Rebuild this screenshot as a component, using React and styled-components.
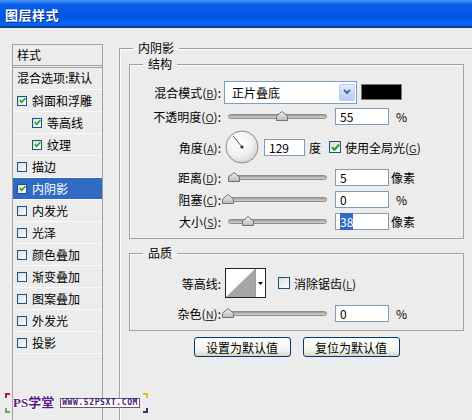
import React from "react";
import styled, { createGlobalStyle } from "styled-components";

const GlobalStyle = createGlobalStyle`
  html, body {
    margin: 0;
    padding: 0;
    background: #ececec;
  }
  body {
    font-family: "Noto Sans CJK SC", "Liberation Sans", sans-serif;
    font-size: 12px;
    color: #000;
  }
`;

const Window = styled.div`
  position: relative;
  width: 472px;
  height: 420px;
  overflow: hidden;
  background: #ececec;
  display: flex;
  flex-direction: column;
`;

const TitleBar = styled.div`
  height: 28px;
  flex: none;
  display: flex;
  align-items: center;
  padding-left: 5px;
  box-sizing: border-box;
  background: linear-gradient(
    to bottom,
    #4a95f6 0,
    #2f82f2 2px,
    #0a5fe8 4px,
    #0055e3 18px,
    #0a66f2 23px,
    #0862ee 26px,
    #0b3f8f 26px,
    #0b3f8f 28px
  );
`;

const Title = styled.span`
  color: #fff;
  font-size: 13px;
  font-weight: 700;
  letter-spacing: 0.5px;
  text-shadow: 1px 1px 0 #0a2a80;
`;

const Body = styled.div`
  position: relative;
  flex: 1;
  display: flex;
  align-items: stretch;
`;

//sidebar------------------------------------------------------------

const Sidebar = styled.div`
  margin-left: 12px;
  margin-top: 16px;
  width: 91px;
  flex: none;
  box-sizing: border-box;
  border: 1px solid #a0a0a0;
  border-bottom: none;
`;

const SideHeader = styled.div`
  height: 23px;
  box-sizing: border-box;
  padding-left: 4px;
  line-height: 19px;
  border-bottom: 3px double #a0a0a0;
`;

const SideRow = styled.div`
  height: 22px;
  box-sizing: border-box;
  display: flex;
  align-items: center;
  gap: 5px;
  padding-left: ${(p) => (p.$indent ? 19 : 4)}px;
  padding-bottom: ${(p) => (p.$top ? 3 : 0)}px;
  border-bottom: 1px solid #fafafa;
  white-space: nowrap;
  background: ${(p) => (p.$selected ? "#316ac5" : "transparent")};
  color: ${(p) => (p.$selected ? "#fff" : "#000")};
`;

const BoxOuter = styled.span`
  width: ${(p) => p.$size}px;
  height: ${(p) => p.$size}px;
  flex: none;
  box-sizing: border-box;
  border: 1px solid #1c5180;
  background: linear-gradient(135deg, #dcdcd7, #fff);
  display: flex;
  align-items: center;
  justify-content: center;
`;

function CheckBox({ checked, size = 10 }) {
  return (
    <BoxOuter $size={size}>
      {checked && (
        <svg width={size - 3} height={size - 3} viewBox="0 0 7 7">
          <path d="M0.8 3.3 L2.7 5.3 L6.3 1.2" fill="none" stroke="#21a121" strokeWidth="1.6" />
        </svg>
      )}
    </BoxOuter>
  );
}

//main panel------------------------------------------------------------

const Main = styled.div`
  margin-left: 16px;
  flex: none;
`;

const Group = styled.fieldset`
  margin: ${(p) => p.$mt || 0}px 0 0 0;
  padding: 0;
  min-width: 0;
  box-sizing: border-box;
  width: ${(p) => p.$w}px;
  height: ${(p) => p.$h}px;
  border: 1px solid #a0a0a0;
  box-shadow: inset 1px 1px 0 #fbfbfb;
`;

const Legend = styled.legend`
  margin-left: 13px;
  padding: 0 5px;
  line-height: 16px;
  height: 16px;
`;

const GroupInner = styled.div`
  padding: ${(p) => p.$pt || 0}px 0 0 ${(p) => p.$pl || 0}px;
`;

const Row = styled.div`
  display: flex;
  align-items: center;
  height: ${(p) => p.$h}px;
  margin-top: ${(p) => p.$mt || 0}px;
  white-space: nowrap;
`;

const Label = styled.div`
  width: 94px;
  flex: none;
  box-sizing: border-box;
  padding-right: 3px;
  text-align: right;
`;

const Key = styled.span`
  font-size: 11px;
  color: #333;
  text-decoration: underline;
`;

const Select = styled.div`
  width: 133px;
  height: 23px;
  box-sizing: border-box;
  border: 1px solid #7f9db9;
  background: #fff;
  display: flex;
  align-items: center;
  justify-content: space-between;
  padding-left: 7px;
`;

const SelectButton = styled.span`
  width: 16px;
  height: 17px;
  margin-right: 1px;
  box-sizing: border-box;
  border: 1px solid #b9cdf7;
  border-radius: 2px;
  background: linear-gradient(#e2ebfe, #b6cbf8);
  display: flex;
  align-items: center;
  justify-content: center;
`;

const Swatch = styled.div`
  width: 41px;
  height: 16px;
  margin-left: 4px;
  box-sizing: border-box;
  border: 1px solid #777;
  background: #000;
`;

const SliderBox = styled.div`
  width: 111px;
  flex: none;
  box-sizing: border-box;
  padding: 0 8px 0 4px;
`;

const TrackArea = styled.div`
  position: relative;
  height: 14px;
  display: flex;
  align-items: center;
`;

const Track = styled.div`
  width: 100%;
  height: 5px;
  box-sizing: border-box;
  border-radius: 3px;
  border: 1px solid #8d8d8d;
  background: linear-gradient(#9c9c9c, #d4d4d4);
`;

const Thumb = styled.div`
  position: absolute;
  top: 2px;
  width: 12px;
  height: 10px;
  transform: translateX(-50%);
  display: flex;
`;

function Slider({ value }) {
  return (
    <SliderBox>
      <TrackArea>
        <Track />
        <Thumb style={{ left: `${value}%` }}>
          <svg width="12" height="10" viewBox="0 0 12 10">
            <defs>
              <linearGradient id="tg" x1="0" y1="0" x2="0" y2="1">
                <stop offset="0" stopColor="#f4f4f4" />
                <stop offset="1" stopColor="#b8b8b8" />
              </linearGradient>
            </defs>
            <path d="M6 0.5 L11.5 5.2 L11.5 9.5 L0.5 9.5 L0.5 5.2 Z" fill="url(#tg)" stroke="#707070" />
          </svg>
        </Thumb>
      </TrackArea>
    </SliderBox>
  );
}

const Field = styled.div`
  width: ${(p) => p.$w || 54}px;
  height: 17px;
  flex: none;
  box-sizing: border-box;
  border: 1px solid #7f9db9;
  background: #fff;
  padding-left: 4px;
  line-height: 15px;
`;

const Selected = styled.span`
  background: #316ac5;
  color: #fff;
`;

const Unit = styled.span`
  margin-left: ${(p) => p.$ml || 5}px;
`;

const DialBox = styled.div`
  width: 40px;
  flex: none;
  display: flex;
  padding-left: 1px;
  box-sizing: border-box;
`;

const CheckLabel = styled.div`
  display: flex;
  align-items: center;
  gap: 4px;
  margin-left: ${(p) => p.$ml}px;
`;

const ContourBox = styled.div`
  width: 41px;
  height: 30px;
  margin-left: 1px;
  flex: none;
  box-sizing: border-box;
  border: 1px solid #222;
  background: #fff;
  display: flex;
`;

const ContourArrow = styled.div`
  flex: 1;
  border-left: 1px solid #9a9a9a;
  display: flex;
  align-items: center;
  justify-content: center;
`;

const ButtonRow = styled.div`
  width: 335px;
  margin-top: 6px;
  display: flex;
  justify-content: center;
  gap: 12px;
`;

const Button = styled.div`
  width: 97px;
  height: 20px;
  box-sizing: border-box;
  border: 1px solid #003c74;
  border-radius: 3px;
  background: linear-gradient(#ffffff, #f3f3ee 70%, #d8d3c8);
  display: flex;
  align-items: center;
  justify-content: center;
`;

//watermark------------------------------------------------------------

const Watermark = styled.div`
  position: absolute;
  left: 5px;
  top: 365px;
  display: flex;
  align-items: center;
  gap: 3px;
`;

const Corners = styled.div`
  display: flex;
  flex-direction: column;
  justify-content: space-between;
  height: 20px;
`;

const Corner = styled.span`
  width: 5px;
  height: 5px;
  box-sizing: border-box;
  border-top: ${(p) => (p.$top ? `2px solid ${p.$c}` : "none")};
  border-bottom: ${(p) => (p.$top ? "none" : `2px solid ${p.$c}`)};
  border-left: ${(p) => (p.$left ? `2px solid ${p.$c}` : "none")};
  border-right: ${(p) => (p.$left ? "none" : `2px solid ${p.$c}`)};
`;

const Brand = styled.span`
  font-family: "Liberation Serif", "Noto Sans CJK SC", serif;
  font-size: 13px;
  font-weight: 700;
  color: #5b1a86;
  line-height: 16px;
  text-shadow: 1px 0 #fff, -1px 0 #fff, 0 1px #fff, 0 -1px #fff;
  margin-right: 3px;
`;

const Url = styled.span`
  font-family: "DejaVu Sans Mono", monospace;
  font-size: 8px;
  font-weight: 700;
  line-height: 8px;
  color: #4a1a70;
  background: #fff;
  border: 1px solid #6a5a7a;
  padding: 0 1px;
  letter-spacing: 0.6px;
`;

const layers = [
  { name: "斜面和浮雕", checked: true },
  { name: "等高线", checked: true, indent: true },
  { name: "纹理", checked: true, indent: true },
  { name: "描边" },
  { name: "内阴影", checked: true, selected: true },
  { name: "内发光" },
  { name: "光泽" },
  { name: "颜色叠加" },
  { name: "渐变叠加" },
  { name: "图案叠加" },
  { name: "外发光" },
  { name: "投影" },
];

function App() {
  const a = (129 * Math.PI) / 180;
  const lx = 17 + 14 * Math.cos(a);
  const ly = 17 - 14 * Math.sin(a);

  return (
    <>
      <GlobalStyle />
      <Window>
        <TitleBar>
          <Title>图层样式</Title>
        </TitleBar>
        <Body>
          <Sidebar>
            <SideHeader>样式</SideHeader>
            <SideRow $top>混合选项:默认</SideRow>
            {layers.map((l) => (
              <SideRow key={l.name} $indent={l.indent} $selected={l.selected}>
                <CheckBox checked={l.checked} />
                {l.name}
              </SideRow>
            ))}
          </Sidebar>

          <Main>
            <Group $mt={12} $w={360} $h={420}>
              <Legend>内阴影</Legend>
              <GroupInner $pl={9}>
                {/* 结构 */}
                <Group $w={335} $h={183}>
                  <Legend>结构</Legend>
                  <GroupInner $pt={8}>
                    <Row $h={24}>
                      <Label>
                        混合模式(<Key>B</Key>):
                      </Label>
                      <Select>
                        正片叠底
                        <SelectButton>
                          <svg width="8" height="6" viewBox="0 0 8 6">
                            <path d="M1 1 L4 4 L7 1" fill="none" stroke="#4d6185" strokeWidth="1.8" />
                          </svg>
                        </SelectButton>
                      </Select>
                      <Swatch />
                    </Row>
                    <Row $h={24}>
                      <Label>
                        不透明度(<Key>O</Key>):
                      </Label>
                      <Slider value={55} />
                      <Field>55</Field>
                      <Unit $ml={7}>%</Unit>
                    </Row>
                    <Row $h={38}>
                      <Label>
                        角度(<Key>A</Key>):
                      </Label>
                      <DialBox>
                        <svg width="34" height="34" viewBox="0 0 34 34">
                          <defs>
                            <radialGradient id="dg" cx="0.4" cy="0.35" r="0.7">
                              <stop offset="0" stopColor="#ffffff" />
                              <stop offset="0.6" stopColor="#f0f0f0" />
                              <stop offset="1" stopColor="#cfcfcf" />
                            </radialGradient>
                          </defs>
                          <circle cx="17" cy="17" r="16" fill="url(#dg)" stroke="#8c8c8c" />
                          <line x1="17" y1="17" x2={lx} y2={ly} stroke="#555" strokeWidth="1" />
                          <circle cx="17" cy="17" r="1.6" fill="#333" />
                        </svg>
                      </DialBox>
                      <Field $w={41}>129</Field>
                      <Unit $ml={4}>度</Unit>
                      <CheckLabel $ml={8}>
                        <CheckBox checked size={12} />
                        <span>
                          使用全局光(<Key>G</Key>)
                        </span>
                      </CheckLabel>
                    </Row>
                    <Row $h={22}>
                      <Label>
                        距离(<Key>D</Key>):
                      </Label>
                      <Slider value={6} />
                      <Field>5</Field>
                      <Unit $ml={2}>像素</Unit>
                    </Row>
                    <Row $h={22}>
                      <Label>
                        阻塞(<Key>C</Key>):
                      </Label>
                      <Slider value={0} />
                      <Field>0</Field>
                      <Unit $ml={7}>%</Unit>
                    </Row>
                    <Row $h={22}>
                      <Label>
                        大小(<Key>S</Key>):
                      </Label>
                      <Slider value={20} />
                      <Field>
                        <Selected>38</Selected>
                      </Field>
                      <Unit $ml={2}>像素</Unit>
                    </Row>
                  </GroupInner>
                </Group>

                {/* 品质 */}
                <Group $mt={6} $w={335} $h={86}>
                  <Legend>品质</Legend>
                  <GroupInner $pt={7}>
                    <Row $h={30}>
                      <Label>等高线:</Label>
                      <ContourBox>
                        <svg width="29" height="28" viewBox="0 0 29 28">
                          <path d="M0 28 L29 0 L29 28 Z" fill="#a6a6a6" />
                        </svg>
                        <ContourArrow>
                          <svg width="5" height="3" viewBox="0 0 5 3">
                            <path d="M0 0 L5 0 L2.5 3 Z" fill="#000" />
                          </svg>
                        </ContourArrow>
                      </ContourBox>
                      <CheckLabel $ml={12}>
                        <CheckBox size={12} />
                        <span>
                          消除锯齿(<Key>L</Key>)
                        </span>
                      </CheckLabel>
                    </Row>
                    <Row $h={22} $mt={4}>
                      <Label>
                        杂色(<Key>N</Key>):
                      </Label>
                      <Slider value={0} />
                      <Field>0</Field>
                      <Unit $ml={7}>%</Unit>
                    </Row>
                  </GroupInner>
                </Group>

                <ButtonRow>
                  <Button>设置为默认值</Button>
                  <Button>复位为默认值</Button>
                </ButtonRow>
              </GroupInner>
            </Group>
          </Main>

          <Watermark>
            <Corners>
              <Corner $top $left $c="#b0204a" />
              <Corner $left $c="#58b848" />
            </Corners>
            <Brand>PS学堂</Brand>
            <Url>WWW.52PSXT.COM</Url>
            <Corners>
              <Corner $top $c="#d8c030" />
              <Corner $c="#283868" />
            </Corners>
          </Watermark>
        </Body>
      </Window>
    </>
  );
}

export default App;
